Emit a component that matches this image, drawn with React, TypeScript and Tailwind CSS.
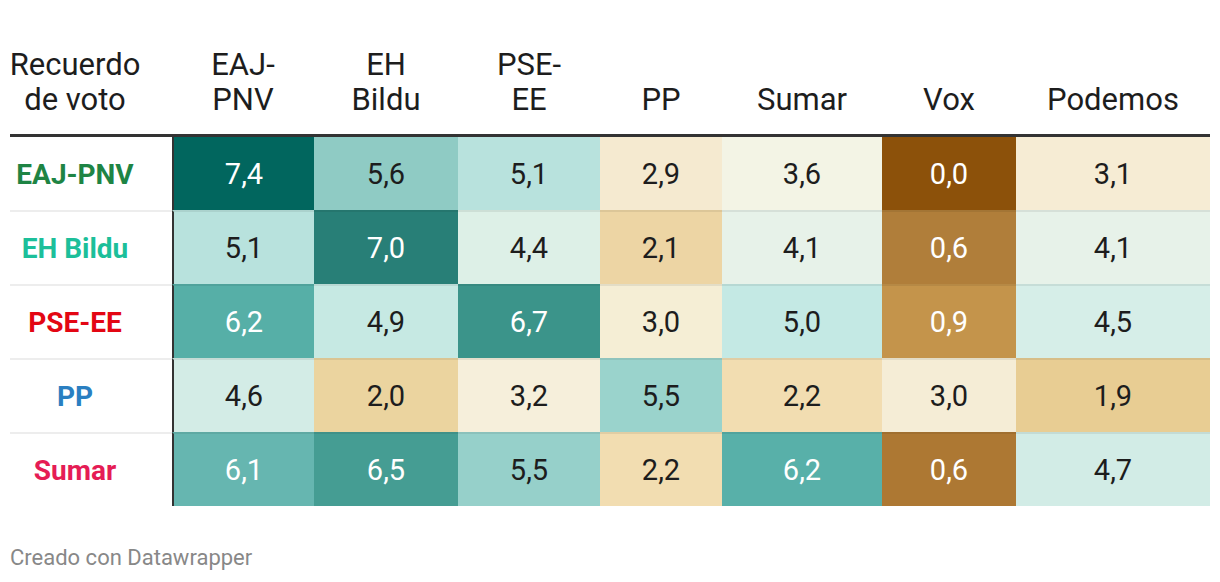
import React from "react";

type Cell = { v: string; bg: string; light?: boolean };
type Row = { label: string; color: string; cells: Cell[] };

const COLS = "grid grid-cols-[162px_142px_144px_142px_122px_160px_134px_194px]";

const headers: string[][] = [
  ["EAJ-", "PNV"],
  ["EH", "Bildu"],
  ["PSE-", "EE"],
  ["PP"],
  ["Sumar"],
  ["Vox"],
  ["Podemos"],
];

const rows: Row[] = [
  {
    label: "EAJ-PNV",
    color: "#1e8444",
    cells: [
      { v: "7,4", bg: "#01665e", light: true },
      { v: "5,6", bg: "#8fcbc4" },
      { v: "5,1", bg: "#b8e2dd" },
      { v: "2,9", bg: "#f5ead0" },
      { v: "3,6", bg: "#f3f4e5" },
      { v: "0,0", bg: "#8c510a", light: true },
      { v: "3,1", bg: "#f6ecd4" },
    ],
  },
  {
    label: "EH Bildu",
    color: "#1cbf9a",
    cells: [
      { v: "5,1", bg: "#b8e2dd" },
      { v: "7,0", bg: "#287f77", light: true },
      { v: "4,4", bg: "#ddf0e7" },
      { v: "2,1", bg: "#edd5a4" },
      { v: "4,1", bg: "#e7f2e9" },
      { v: "0,6", bg: "#b07e3a", light: true },
      { v: "4,1", bg: "#e7f2e9" },
    ],
  },
  {
    label: "PSE-EE",
    color: "#e30613",
    cells: [
      { v: "6,2", bg: "#56afa7", light: true },
      { v: "4,9", bg: "#c6e9e3" },
      { v: "6,7", bg: "#3b948a", light: true },
      { v: "3,0", bg: "#f5eed5" },
      { v: "5,0", bg: "#c4e9e4" },
      { v: "0,9", bg: "#c4944b", light: true },
      { v: "4,5", bg: "#d6eee8" },
    ],
  },
  {
    label: "PP",
    color: "#2a7fc1",
    cells: [
      { v: "4,6", bg: "#d3ece6" },
      { v: "2,0", bg: "#ebd49f" },
      { v: "3,2", bg: "#f6efdb" },
      { v: "5,5", bg: "#9ad3cc" },
      { v: "2,2", bg: "#f2ddb1" },
      { v: "3,0", bg: "#f5edd6" },
      { v: "1,9", bg: "#e8cd93" },
    ],
  },
  {
    label: "Sumar",
    color: "#e51c55",
    cells: [
      { v: "6,1", bg: "#66b6b0", light: true },
      { v: "6,5", bg: "#459d93", light: true },
      { v: "5,5", bg: "#96d0ca" },
      { v: "2,2", bg: "#f2ddb1" },
      { v: "6,2", bg: "#58b0a9", light: true },
      { v: "0,6", bg: "#ad7833", light: true },
      { v: "4,7", bg: "#d2ece6" },
    ],
  },
];

export default function App() {
  return (
    <div className="h-[582px] w-[1220px] overflow-hidden bg-white px-[10px] pt-[47px] font-[Roboto,sans-serif] text-[#1d1d1d]">
      {/* ── Header ───────────────────────────────────── */}
      <div className={`${COLS} border-b-[3px] border-[#333] pb-[17px] text-[31px] leading-[35px]`}>
        <div className="flex flex-col items-center justify-end pr-[32px] text-center">
          <span>Recuerdo</span>
          <span>de voto</span>
        </div>
        {headers.map((h, i) => (
          <div key={i} className="flex flex-col items-center justify-end text-center">
            {h.map((line, j) => (
              <span key={j}>{line}</span>
            ))}
          </div>
        ))}
      </div>

      {/* ── Body ─────────────────────────────────────── */}
      {rows.map((row, ri) => (
        <div key={row.label} className={`${COLS} ${ri === 0 ? "h-[73px]" : "h-[74px]"}`}>
          <div
            className={`flex items-center justify-center pr-[32px] pt-[2px] text-[28px] font-bold ${
              ri === 0 ? "" : "border-t-2 border-[rgba(0,0,0,0.07)]"
            }`}
            style={{ color: row.color }}
          >
            {row.label}
          </div>
          {row.cells.map((c, ci) => (
            <div
              key={ci}
              className={`flex items-center justify-center pt-[2px] text-[29px] ${
                ri === 0 ? "" : "border-t-2 border-t-[rgba(0,0,0,0.07)]"
              } ${ci === 0 ? "border-l-2 border-l-[#333]" : ""} ${
                c.light ? "text-white" : "text-[#1d1d1d]"
              }`}
              style={{ backgroundColor: c.bg }}
            >
              {c.v}
            </div>
          ))}
        </div>
      ))}

      {/* ── Footer ───────────────────────────────────── */}
      <p className="mt-[39px] text-[22px] leading-[26px] text-[#888]">Creado con Datawrapper</p>
    </div>
  );
}
